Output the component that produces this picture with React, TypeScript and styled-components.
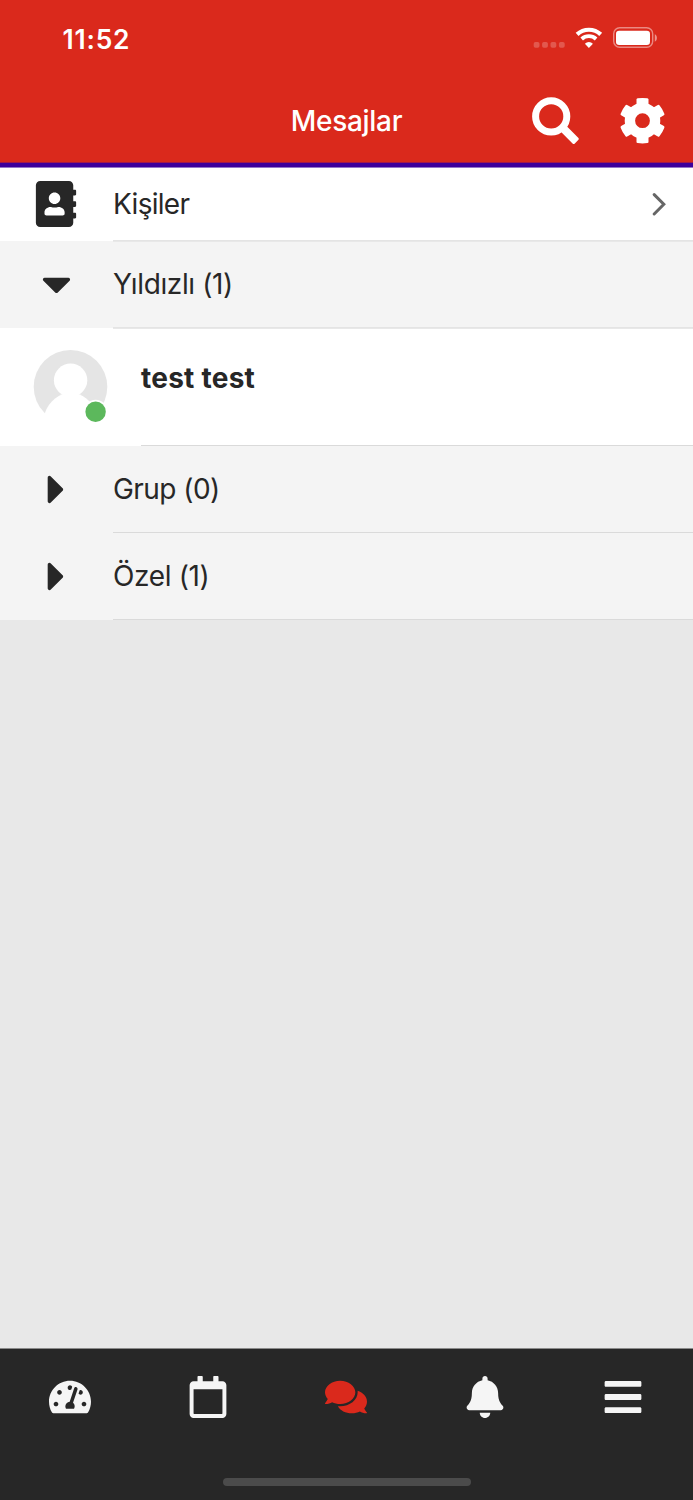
import React from "react";
import styled, { createGlobalStyle } from "styled-components";
import {
  FaAddressBook,
  FaBars,
  FaBell,
  FaCaretDown,
  FaCaretRight,
  FaComments,
  FaRegCalendar,
  FaTachometerAlt,
} from "react-icons/fa";

const GlobalStyle = createGlobalStyle`
  * { box-sizing: border-box; }
  body { margin: 0; background: #e8e8e8; }
`;

const Screen = styled.div`
  display: flex;
  flex-direction: column;
  width: 693px;
  height: 1500px;
  overflow: hidden;
  background: #e8e8e8;
  color: #272727;
  font-family: Inter, "Liberation Sans", sans-serif;
`;

const Header = styled.header`
  flex: none;
  height: 168px;
  background: linear-gradient(
    #da291c 162px,
    #a01a4c 162px,
    #a01a4c 163px,
    #3d009c 163px,
    #3d009c 167px,
    #9377c9 167px
  );
  color: #fff;
`;

const StatusBar = styled.div`
  display: flex;
  align-items: center;
  height: 76px;
  padding: 0 36px 0 62.5px;
`;

const Clock = styled.span`
  font-size: 26.4px;
  font-weight: 560;
  line-height: 32px;
  letter-spacing: 0.8px;
  margin-right: auto;
  padding-top: 1px;
`;

const StatusIcons = styled.svg`
  display: block;
  width: 130px;
  height: 32px;
`;

const TitleBar = styled.div`
  display: grid;
  grid-template-columns: 1fr auto 1fr;
  align-items: center;
  height: 86px;
  padding: 3px 27px 0;
`;

const Title = styled.h1`
  grid-column: 2;
  margin: 0;
  padding-top: 1px;
  font-size: 28px;
  font-weight: 550;
  line-height: 36px;
  letter-spacing: -0.3px;
`;

const Actions = styled.div`
  display: flex;
  justify-content: flex-end;
  gap: 40px;

  svg { display: block; }
`;

const Row = styled.div<{ $height: number; $tinted?: boolean }>`
  flex: none;
  display: flex;
  height: ${(p) => p.$height}px;
  background: ${(p) => (p.$tinted ? "#f4f4f4" : "#fff")};
`;

const Lead = styled.div<{ $width: number }>`
  flex: none;
  display: flex;
  align-items: center;
  justify-content: center;
  width: ${(p) => p.$width}px;

  svg { display: block; }
`;

const Body = styled.div<{ $soft?: boolean }>`
  position: relative;
  flex: 1;
  display: flex;
  align-items: center;
  justify-content: space-between;
  padding-right: 27px;
  border-bottom: 1px solid ${(p) => (p.$soft ? "#e4e4e4" : "#dadada")};
  box-shadow: ${(p) => (p.$soft ? "0 1px 0 #e8e8e8" : "none")};
`;

const Label = styled.span<{ $tracking?: number }>`
  font-size: 28px;
  line-height: 36px;
  letter-spacing: ${(p) => p.$tracking ?? 0}px;
`;

const PersonBody = styled(Body)`
  align-items: flex-start;
  padding-top: 32px;
`;

const PersonName = styled(Label)`
  font-weight: 680;
`;

const Spacer = styled.main`
  flex: 1;
`;

const TabBar = styled.footer`
  flex: none;
  display: flex;
  flex-direction: column;
  align-items: center;
  justify-content: space-between;
  height: 152px;
  padding: 27px 0 14px;
  border-top: 1px solid #8a8a8a;
  background: #272727;
`;

const Tabs = styled.nav`
  display: grid;
  grid-template-columns: repeat(5, 1fr);
  width: 100%;
  padding: 0 0.6px 0 0.4px;
`;

const Tab = styled.div<{ $active?: boolean }>`
  display: flex;
  justify-content: center;
  color: ${(p) => (p.$active ? "#da291c" : "#f5f5f5")};
  padding-right: ${(p) => (p.$active ? 1 : 0)}px;

  svg { display: block; }
`;

const HomeIndicator = styled.div`
  width: 248px;
  height: 8px;
  border-radius: 4px;
  background: #4b4b4b;
`;

const StatusGlyphs = () => (
  <StatusIcons viewBox="0 0 130 32" fill="#fff">
    <g opacity="0.22">
      <rect x="6.7" y="20" width="5.8" height="5.8" rx="1.8" />
      <rect x="15.1" y="20" width="5.8" height="5.8" rx="1.8" />
      <rect x="23.5" y="20" width="5.8" height="5.8" rx="1.8" />
      <rect x="31.9" y="20" width="5.8" height="5.8" rx="1.8" />
    </g>
    <g fill="none" stroke="#fff">
      <path d="M50.1 12.4a17.3 17.3 0 0 1 23.6 0" strokeWidth="4.2" />
      <path d="M54.7 17a10.6 10.6 0 0 1 14.4 0" strokeWidth="3.8" />
    </g>
    <path d="M61.9 25.9l-4-4.1a5.6 5.6 0 0 1 8 0z" />
    <rect x="86.7" y="5.7" width="39" height="19.6" rx="6" fill="none" stroke="#fff" strokeOpacity="0.45" strokeWidth="1.4" />
    <rect x="89" y="8.7" width="34" height="14.2" rx="3.2" />
    <path d="M127.8 12.3c2.8 1.2 2.8 6.2 0 7.4z" opacity="0.5" />
  </StatusIcons>
);

const SearchIcon = () => (
  <svg width="47" height="47" viewBox="0 0 47 47" fill="currentColor">
    <circle cx="19.2" cy="19.4" r="15.6" fill="none" stroke="currentColor" strokeWidth="7" />
    <rect x="17.5" y="-4" width="18.3" height="8" rx="1.6" transform="translate(19.2 19.4) rotate(45)" />
  </svg>
);

const GearIcon = () => (
  <svg width="47" height="47" viewBox="-23.5 -23.7 47 47" fill="currentColor">
    <circle r="12.6" fill="none" stroke="currentColor" strokeWidth="10.4" />
    {[0, 60, 120, 180, 240, 300].map((angle) => (
      <path
        key={angle}
        transform={`rotate(${angle})`}
        d="M-6-14V-21.2Q-6-22.2-4.9-22.4Q0-23.2 4.9-22.4Q6-22.2 6-21.2V-14z"
      />
    ))}
  </svg>
);

const Chevron = () => (
  <svg width="14" height="24" viewBox="0 0 14 24" fill="none" stroke="#666" strokeWidth="3" strokeLinecap="round">
    <path d="M2.2 2.6L11.8 12.3 2.2 22" />
  </svg>
);

const Avatar = () => (
  <svg width="76" height="76" viewBox="0 0 76 76">
    <circle cx="37.5" cy="37.8" r="36.8" fill="#e5e5e5" />
    <path d="M11.7 64.5C15.7 52 26.7 43.8 37.7 43.8S59.7 52 63.7 64.5V76H11.7z" fill="#fff" />
    <circle cx="37.6" cy="31.2" r="16.7" fill="#fff" />
    <circle cx="62.6" cy="62.8" r="12" fill="#fff" />
    <circle cx="62.6" cy="62.8" r="10.2" fill="#5cb85c" />
  </svg>
);

const CaretDown = styled(FaCaretDown)`
  margin-bottom: 2px;
`;

const ContactsIcon = styled(FaAddressBook)`
  margin: 0 0.5px 1px 0;
`;

interface SectionProps {
  label: string;
  tracking: number;
  open?: boolean;
}

const Section = ({ label, tracking, open }: SectionProps) => (
  <Row $height={87} $tinted>
    <Lead $width={113}>{open ? <CaretDown size={47} /> : <FaCaretRight size={47} />}</Lead>
    <Body $soft={open}>
      <Label $tracking={tracking}>{label}</Label>
    </Body>
  </Row>
);

export default function App() {
  return (
    <Screen>
      <GlobalStyle />
      <Header>
        <StatusBar>
          <Clock>11:52</Clock>
          <StatusGlyphs />
        </StatusBar>
        <TitleBar>
          <Title>Mesajlar</Title>
          <Actions>
            <SearchIcon />
            <GearIcon />
          </Actions>
        </TitleBar>
      </Header>
      <Row $height={73}>
        <Lead $width={113}>
          <ContactsIcon size={46} />
        </Lead>
        <Body $soft>
          <Label $tracking={-0.7}>Kişiler</Label>
          <Chevron />
        </Body>
      </Row>
      <Section label="Yıldızlı (1)" tracking={-0.38} open />
      <Row $height={118}>
        <Lead $width={141}>
          <Avatar />
        </Lead>
        <PersonBody>
          <PersonName $tracking={0.25}>test test</PersonName>
        </PersonBody>
      </Row>
      <Section label="Grup (0)" tracking={-0.55} />
      <Section label="Özel (1)" tracking={-0.35} />
      <Spacer />
      <TabBar>
        <Tabs>
          <Tab><FaTachometerAlt size={42} /></Tab>
          <Tab><FaRegCalendar size={42} /></Tab>
          <Tab $active><FaComments size={42} /></Tab>
          <Tab><FaBell size={42} /></Tab>
          <Tab><FaBars size={42} /></Tab>
        </Tabs>
        <HomeIndicator />
      </TabBar>
    </Screen>
  );
}
